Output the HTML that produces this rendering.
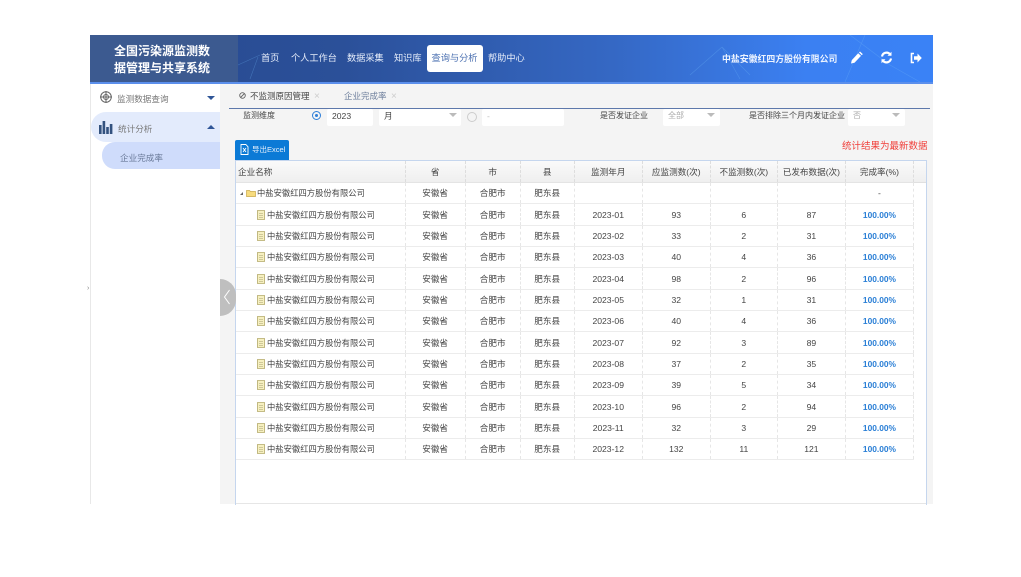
<!DOCTYPE html>
<html lang="zh">
<head>
<meta charset="utf-8">
<title>企业完成率</title>
<style>
html,body{margin:0;padding:0;background:#fff;width:1021px;height:577px;overflow:hidden}
body{position:relative;font-family:"Liberation Sans","Noto Sans CJK SC",sans-serif;color:#444;filter:blur(.35px)}
.a{position:absolute;white-space:nowrap}
#hd{left:90px;top:35px;width:843px;height:47px;background:linear-gradient(90deg,#27498f 0%,#2b5099 30%,#3568c4 62%,#3b80f2 85%,#3a82f6 100%)}
#hdline{left:90px;top:82px;width:843px;height:2px;background:#5b8fec}
#logo{left:90px;top:35px;width:144px;padding-right:4px;background:#3c5a90;color:#fff;font-weight:bold;font-size:12px;line-height:17px;text-align:center;padding-top:8px;height:39px}
#logobg{left:234px;top:35px;width:4px;height:47px;background:#3c5a90}
.nav{top:52px;color:#e6edfa;font-size:9.2px;line-height:13px}
#act{left:426.500px;top:45px;width:56px;height:27px;background:#fff;border-radius:3px;color:#4a6fb0;font-size:9.2px;line-height:27px;text-align:center}
#side{left:90px;top:84px;width:130px;height:420px;background:#fff;border-left:1px solid #e8e8e8;box-sizing:border-box}
#main{left:220px;top:84px;width:713px;height:420px;background:#f4f4f4}
.inp{top:109px;height:17px;background:#fff;border-radius:2px;font-size:8.6px;line-height:14px;color:#444}
.lbl{top:109px;font-size:8px;line-height:13px;color:#444}
.tri{width:0;height:0;border-left:4px solid transparent;border-right:4px solid transparent;border-top:4px solid #bbb}
#tw{left:235px;top:160px;width:690px;height:344px;background:#fff;border:1px solid #c5d6ee;border-bottom:0;box-sizing:content-box}
table{border-collapse:collapse;table-layout:fixed;position:absolute;left:0;top:0;width:678px}
th{height:21px;padding:0;font-weight:normal;font-size:8.6px;color:#444;background:linear-gradient(#fafafa,#efefef);border-right:1px dashed #ddd;border-bottom:1px solid #e4e4e4;text-align:center}
td{height:20.35px;padding:0;font-size:8.6px;color:#444;text-align:center;border-right:1px dashed #e6e6e6;border-bottom:1px solid #ececec;white-space:nowrap}
td.n{text-align:left;padding-left:21px;font-size:8.3px;color:#444}
td.n svg{vertical-align:-2px;margin-right:2px}
td.p{color:#2a7fd6;font-weight:bold;font-size:8.4px}
</style>
</head>
<body>
<svg width="0" height="0" style="position:absolute"><defs><symbol id="doc" viewBox="0 0 8 10"><path d="M.5.5h7v9h-7z" fill="#f6f0c0" stroke="#b3a868" stroke-width=".8"/><path d="M2 3.500h4M2 5.500h4M2 7.500h4" stroke="#a8a070" stroke-width=".6"/></symbol></defs></svg>
<div class="a" id="hd">
<svg width="843" height="47" style="position:absolute;left:0;top:0" fill="none" stroke="#6fb6f5" stroke-width=".6" opacity=".35">
<path d="M148 30L170 20M160 44L168 22M600 40L632 12M632 12L650 44M632 12L660 40M760 0L800 30L830 47M755 47L775 0"/>
</svg>
</div>
<div class="a" id="hdline"></div>
<div class="a" id="logo">全国污染源监测数<br>据管理与共享系统</div>
<div class="a" id="logobg"></div>
<div class="a nav" style="left:261px">首页</div>
<div class="a nav" style="left:291px">个人工作台</div>
<div class="a nav" style="left:347px">数据采集</div>
<div class="a nav" style="left:394px">知识库</div>
<div class="a" id="act">查询与分析</div>
<div class="a nav" style="left:488px">帮助中心</div>
<div class="a" style="left:722px;top:52px;color:#eef4ff;font-size:8.900px;font-weight:bold;line-height:14px">中盐安徽红四方股份有限公司</div>
<svg class="a" style="left:850px;top:51px" width="13" height="14" viewBox="0 0 13 13"><path d="M1 12l.8-3.400 6.400-6.800 2.800 2.600-6.500 6.800zM9 1l1-1 2.800 2.600-1 1.100z" fill="#fff"/></svg>
<svg class="a" style="left:880px;top:51px" width="13" height="13" viewBox="0 0 13 13" fill="none" stroke="#fff" stroke-width="2.200"><path d="M2 5.500A4.600 4.600 0 0 1 10 3.200M11 7.500A4.600 4.600 0 0 1 3 9.800"/><path d="M11.500 .8v4H7.500z M1.500 12.200v-4h4z" fill="#fff" stroke="none"/></svg>
<svg class="a" style="left:910px;top:52px" width="12" height="12" viewBox="0 0 12 12"><path d="M4 1.500H1.500v9H4" fill="none" stroke="#fff" stroke-width="1.600"/><path d="M4 4.200h3.500V1.500L11.800 6 7.500 10.500V7.800H4z" fill="#fff"/></svg>

<div class="a" id="side"></div>
<svg class="a" style="left:100px;top:91px" width="12" height="12" viewBox="0 0 12 12" fill="none" stroke="#666" stroke-width="1"><circle cx="6" cy="6" r="5.300"/><circle cx="6" cy="6" r="2.500"/><path d="M0 6h12M6 0v12"/></svg>
<div class="a" style="left:117px;top:92px;font-size:8.600px;line-height:14px;color:#777">监测数据查询</div>
<div class="a" style="left:207px;top:96px;width:0;height:0;border-left:4px solid transparent;border-right:4px solid transparent;border-top:4px solid #2f5597"></div>
<div class="a" style="left:91px;top:112px;width:129px;height:30px;background:#e3ebfc;border-radius:15px 0 0 15px"></div>
<svg class="a" style="left:99px;top:121px" width="14" height="13" viewBox="0 0 14 13" fill="#33527f"><rect x="0" y="4" width="2.600" height="9"/><rect x="3.600" y="0" width="2.600" height="13"/><rect x="7.200" y="6" width="2.600" height="7"/><rect x="10.800" y="3" width="2.600" height="10"/></svg>
<div class="a" style="left:118px;top:122px;font-size:8.600px;line-height:14px;color:#777">统计分析</div>
<div class="a" style="left:207px;top:125px;width:0;height:0;border-left:4px solid transparent;border-right:4px solid transparent;border-bottom:4px solid #2f5597"></div>
<div class="a" style="left:102px;top:142px;width:118px;height:27px;background:#cfdcfb;border-radius:13px 0 0 13px"></div>
<div class="a" style="left:120px;top:151px;font-size:8.600px;line-height:14px;color:#6a7a99">企业完成率</div>
<div class="a" style="left:87px;top:285px;font-size:7px;line-height:8px;color:#888">›</div>

<div class="a" id="main"></div>
<svg class="a" style="left:239px;top:92px" width="7" height="7" viewBox="0 0 7 7" fill="none" stroke="#666" stroke-width=".9"><circle cx="3.500" cy="3.500" r="2.800"/><path d="M1.500 5.500l4-4"/></svg>
<div class="a" style="left:250px;top:90px;font-size:8.500px;line-height:13px;color:#444">不监测原因管理</div>
<div class="a" style="left:314px;top:90px;font-size:10px;line-height:13px;color:#ccc">×</div>
<div class="a" style="left:344px;top:90px;font-size:8.500px;line-height:13px;color:#6e7f9c">企业完成率</div>
<div class="a" style="left:391px;top:90px;font-size:10px;line-height:13px;color:#ccc">×</div>
<div class="a" style="left:229px;top:108px;width:701px;height:1px;background:#5d78ab"></div>

<div class="a lbl" style="left:243px">监测维度</div>
<div class="a" style="left:312px;top:111px;width:7px;height:7px;border:1px solid #2f7fd8;border-radius:50%"></div>
<div class="a" style="left:315px;top:114px;width:3px;height:3px;background:#2f7fd8;border-radius:50%"></div>
<div class="a inp" style="left:327px;width:46px;padding-left:5px;box-sizing:border-box">2023</div>
<div class="a inp" style="left:379px;width:82px;padding-left:5px;box-sizing:border-box">月</div>
<div class="a tri" style="left:449px;top:113px"></div>
<div class="a" style="left:467px;top:112px;width:8px;height:8px;border:1px solid #ccc;border-radius:50%"></div>
<div class="a inp" style="left:482px;width:82px;padding-left:5px;box-sizing:border-box;color:#bbb">-</div>
<div class="a lbl" style="left:600px">是否发证企业</div>
<div class="a inp" style="left:663px;width:57px;padding-left:5px;box-sizing:border-box;color:#aaa;font-size:8px">全部</div>
<div class="a tri" style="left:707px;top:113px"></div>
<div class="a lbl" style="left:749px">是否排除三个月内发证企业</div>
<div class="a inp" style="left:848px;width:57px;padding-left:5px;box-sizing:border-box;color:#aaa;font-size:8px">否</div>
<div class="a tri" style="left:892px;top:113px"></div>

<div class="a" style="left:235px;top:140px;width:54px;height:20px;background:#0b7ad6;border-radius:2px 2px 0 0"></div>
<svg class="a" style="left:240px;top:144px" width="9" height="11" viewBox="0 0 9 11" fill="none" stroke="#fff" stroke-width=".9"><path d="M1 .5h4.800L8 2.800v7.700H1z"/><path d="M3 4l3 4M6 4L3 8"/></svg>
<div class="a" style="left:252px;top:143px;font-size:7.500px;line-height:13px;color:#e8f1fc">导出Excel</div>
<div class="a" style="left:842px;top:140px;font-size:9.500px;line-height:14px;color:#f0413c">统计结果为最新数据</div>

<div class="a" id="tw">
<table>
<colgroup><col style="width:169px"><col style="width:60px"><col style="width:55px"><col style="width:54px"><col style="width:68px"><col style="width:68px"><col style="width:67px"><col style="width:68px"><col style="width:68px"></colgroup>
<tr><th style="text-align:left;padding-left:2px">企业名称</th><th>省</th><th>市</th><th>县</th><th>监测年月</th><th>应监测数(次)</th><th>不监测数(次)</th><th>已发布数据(次)</th><th>完成率(%)</th></tr>
<tr><td class="n" style="padding-left:4px"><span style="display:inline-block;width:0;height:0;border-left:3px solid transparent;border-bottom:3px solid #666;margin-right:3px;vertical-align:1px"></span><svg width="10" height="8" viewBox="0 0 10 8" style="vertical-align:-1px;margin-right:1px"><path d="M.5 7.500V1.500h3l1 1h5v5z" fill="#f7dc7e" stroke="#c9a84a" stroke-width=".7"/></svg>中盐安徽红四方股份有限公司</td><td>安徽省</td><td>合肥市</td><td>肥东县</td><td></td><td></td><td></td><td></td><td>-</td></tr>
<tr><td class="n"><svg width="8" height="10"><use href="#doc"/></svg>中盐安徽红四方股份有限公司</td><td>安徽省</td><td>合肥市</td><td>肥东县</td><td>2023-01</td><td>93</td><td>6</td><td>87</td><td class="p">100.00%</td></tr>
<tr><td class="n"><svg width="8" height="10"><use href="#doc"/></svg>中盐安徽红四方股份有限公司</td><td>安徽省</td><td>合肥市</td><td>肥东县</td><td>2023-02</td><td>33</td><td>2</td><td>31</td><td class="p">100.00%</td></tr>
<tr><td class="n"><svg width="8" height="10"><use href="#doc"/></svg>中盐安徽红四方股份有限公司</td><td>安徽省</td><td>合肥市</td><td>肥东县</td><td>2023-03</td><td>40</td><td>4</td><td>36</td><td class="p">100.00%</td></tr>
<tr><td class="n"><svg width="8" height="10"><use href="#doc"/></svg>中盐安徽红四方股份有限公司</td><td>安徽省</td><td>合肥市</td><td>肥东县</td><td>2023-04</td><td>98</td><td>2</td><td>96</td><td class="p">100.00%</td></tr>
<tr><td class="n"><svg width="8" height="10"><use href="#doc"/></svg>中盐安徽红四方股份有限公司</td><td>安徽省</td><td>合肥市</td><td>肥东县</td><td>2023-05</td><td>32</td><td>1</td><td>31</td><td class="p">100.00%</td></tr>
<tr><td class="n"><svg width="8" height="10"><use href="#doc"/></svg>中盐安徽红四方股份有限公司</td><td>安徽省</td><td>合肥市</td><td>肥东县</td><td>2023-06</td><td>40</td><td>4</td><td>36</td><td class="p">100.00%</td></tr>
<tr><td class="n"><svg width="8" height="10"><use href="#doc"/></svg>中盐安徽红四方股份有限公司</td><td>安徽省</td><td>合肥市</td><td>肥东县</td><td>2023-07</td><td>92</td><td>3</td><td>89</td><td class="p">100.00%</td></tr>
<tr><td class="n"><svg width="8" height="10"><use href="#doc"/></svg>中盐安徽红四方股份有限公司</td><td>安徽省</td><td>合肥市</td><td>肥东县</td><td>2023-08</td><td>37</td><td>2</td><td>35</td><td class="p">100.00%</td></tr>
<tr><td class="n"><svg width="8" height="10"><use href="#doc"/></svg>中盐安徽红四方股份有限公司</td><td>安徽省</td><td>合肥市</td><td>肥东县</td><td>2023-09</td><td>39</td><td>5</td><td>34</td><td class="p">100.00%</td></tr>
<tr><td class="n"><svg width="8" height="10"><use href="#doc"/></svg>中盐安徽红四方股份有限公司</td><td>安徽省</td><td>合肥市</td><td>肥东县</td><td>2023-10</td><td>96</td><td>2</td><td>94</td><td class="p">100.00%</td></tr>
<tr><td class="n"><svg width="8" height="10"><use href="#doc"/></svg>中盐安徽红四方股份有限公司</td><td>安徽省</td><td>合肥市</td><td>肥东县</td><td>2023-11</td><td>32</td><td>3</td><td>29</td><td class="p">100.00%</td></tr>
<tr><td class="n"><svg width="8" height="10"><use href="#doc"/></svg>中盐安徽红四方股份有限公司</td><td>安徽省</td><td>合肥市</td><td>肥东县</td><td>2023-12</td><td>132</td><td>11</td><td>121</td><td class="p">100.00%</td></tr>
</table>
<div style="position:absolute;left:678px;top:0;width:12px;height:21px;background:linear-gradient(#fafafa,#efefef);border-bottom:1px solid #e0e0e0"></div>
</div>
<div class="a" style="left:236px;top:503px;width:690px;height:1px;background:#e6e6e6"></div>

<div class="a" style="left:220px;top:279px;width:16px;height:37px;background:#bfbfbf;border-radius:0 18px 18px 0"></div>
<svg class="a" style="left:223px;top:289px" width="8" height="16" viewBox="0 0 8 16" fill="none" stroke="#fff" stroke-width="1"><path d="M6.500 1L1.500 8l5 7"/></svg>
</body>
</html>
